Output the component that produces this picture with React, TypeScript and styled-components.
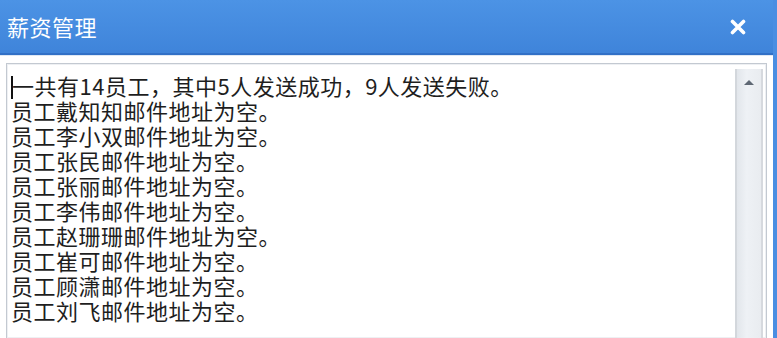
import styled, { createGlobalStyle } from "styled-components";

const Global = createGlobalStyle`
  html, body {
    margin: 0;
    padding: 0;
    background: #fff;
    overflow: hidden;
  }
`;

const Window = styled.div`
  width: 777px;
  height: 338px;
  box-sizing: border-box;
  display: flex;
  flex-direction: column;
  background: #fff;
  border-right: 4px solid #4a8ee2;
  font-family: "Noto Sans CJK SC", "Microsoft YaHei", sans-serif;
  overflow: hidden;
`;

const TitleBar = styled.div`
  height: 53px;
  flex: none;
  display: flex;
  align-items: center;
  justify-content: space-between;
  padding: 0 26px 0 7px;
  background: linear-gradient(#4c93e5, #3f84da);
  border-bottom: 2px solid #3170c6;
  box-shadow: 0 1px 0 #dfe8f4;
`;

const Title = styled.span`
  color: #fff;
  font-size: 22px;
  letter-spacing: 0.5px;
  margin-top: -2px;
`;

const CloseButton = styled.button`
  width: 18px;
  height: 18px;
  padding: 0;
  border: none;
  background: none;
  display: flex;
  align-items: center;
  justify-content: center;
  cursor: pointer;
`;

const Body = styled.div`
  flex: 1;
  min-height: 0;
  padding: 8px 6px 0 6px;
  display: flex;
`;

const TextBox = styled.div`
  flex: 1;
  display: flex;
  border: 1px solid #c3c9d1;
  border-bottom: none;
  box-shadow: inset 0 0 0 1px #eef0f3;
  padding: 5px 3px 0 3px;
`;

const Content = styled.div`
  flex: 1;
  padding: 4px 0 0 1px;
  color: #1e1e1e;
  font-size: 22px;
  letter-spacing: 0.5px;
  line-height: 25px;
  white-space: nowrap;
`;

const Line = styled.div`
  height: 25px;
`;

const Caret = styled.span`
  display: inline-block;
  width: 0;
  height: 23px;
  border-left: 2px solid #111;
  vertical-align: -4px;
  margin-right: -1px;
`;

const ScrollBar = styled.div`
  width: 28px;
  flex: none;
  box-sizing: border-box;
  margin-left: 4px;
  background: linear-gradient(90deg, #e2e6eb, #eef1f5 40%, #e9ecf0);
  border-left: 2px solid #d3d7dc;
  border-right: 2px solid #d6d9de;
  display: flex;
  justify-content: center;
  padding-top: 11px;
`;

const ArrowUp = styled.div`
  width: 0;
  height: 0;
  border-left: 5px solid transparent;
  border-right: 5px solid transparent;
  border-bottom: 5px solid #5f6874;
`;

const lines = [
  "员工戴知知邮件地址为空。",
  "员工李小双邮件地址为空。",
  "员工张民邮件地址为空。",
  "员工张丽邮件地址为空。",
  "员工李伟邮件地址为空。",
  "员工赵珊珊邮件地址为空。",
  "员工崔可邮件地址为空。",
  "员工顾潇邮件地址为空。",
  "员工刘飞邮件地址为空。",
];

export default function App() {
  return (
    <>
      <Global />
      <Window>
        <TitleBar>
          <Title>薪资管理</Title>
          <CloseButton aria-label="关闭">
            <svg width="16" height="16" viewBox="0 0 16 16">
              <path
                d="M2.5 2.5 L13.5 13.5 M13.5 2.5 L2.5 13.5"
                stroke="#fff"
                strokeWidth="3.6"
                strokeLinecap="round"
              />
            </svg>
          </CloseButton>
        </TitleBar>
        <Body>
          <TextBox>
            <Content>
              <Line>
                <Caret />
                一共有14员工，其中5人发送成功，9人发送失败。
              </Line>
              {lines.map((l, i) => (
                <Line key={i}>{l}</Line>
              ))}
            </Content>
            <ScrollBar>
              <ArrowUp />
            </ScrollBar>
          </TextBox>
        </Body>
      </Window>
    </>
  );
}
